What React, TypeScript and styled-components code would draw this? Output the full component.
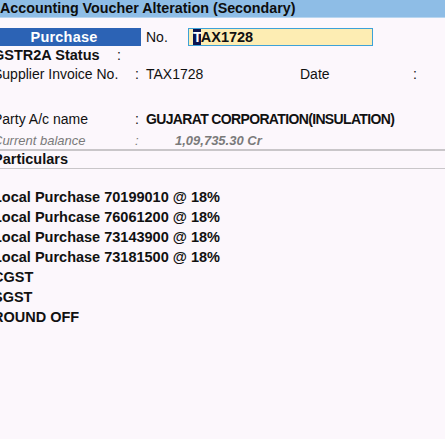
import React from "react";
import styled, { createGlobalStyle } from "styled-components";

const Global = createGlobalStyle`
  html, body { margin: 0; padding: 0; background: #fcf7fc; overflow: hidden; }
  body { font-family: "Liberation Sans", Arial, sans-serif; color: #111; }
`;

const Page = styled.div`
  width: 445px;
  height: 439px;
  background: #fcf7fc;
  overflow: hidden;
`;

const TitleBar = styled.div`
  height: 17px;
  background: #8ebde6;
  border-bottom: 1px solid #b8d6f0;
  font-weight: bold;
  font-size: 14.3px;
  line-height: 17px;
  color: #0d0d0d;
  white-space: nowrap;
`;

const Body = styled.div`
  margin-left: -7px;
`;

const TopRow = styled.div`
  display: flex;
  align-items: center;
  margin-top: 10px;
  height: 18px;
`;

const TypeBadge = styled.div`
  width: 148px;
  height: 18px;
  background: #2c63b5;
  color: #fff;
  font-weight: bold;
  font-size: 14.5px;
  letter-spacing: 0.2px;
  line-height: 18px;
  text-align: center;
  box-sizing: border-box;
  padding-right: 6px;
`;

const NoLabel = styled.div`
  margin-left: 5px;
  width: 42px;
  font-size: 14px;
`;

const NoInput = styled.div`
  width: 185px;
  height: 18px;
  box-sizing: border-box;
  border: 1px solid #3da2d8;
  background: #fdedb3;
  font-weight: bold;
  font-size: 14.5px;
  line-height: 16px;
  padding-left: 4px;
`;

const Cursor = styled.span`
  background: #0b1450;
  color: #fff;
`;

const FieldRow = styled.div<{ $top: number; $muted?: boolean }>`
  display: flex;
  align-items: center;
  height: 18px;
  margin-top: ${(p) => p.$top}px;
  font-size: ${(p) => (p.$muted ? "13px" : "14px")};
  white-space: nowrap;
  color: ${(p) => (p.$muted ? "#7a7a7a" : "#111")};
  font-style: ${(p) => (p.$muted ? "italic" : "normal")};
`;

const Label = styled.div<{ $bold?: boolean; $w: number }>`
  width: ${(p) => p.$w}px;
  font-weight: ${(p) => (p.$bold ? "bold" : "normal")};
  font-size: ${(p) => (p.$bold ? "14.5px" : "inherit")};
`;

const Colon = styled.div`
  width: 11px;
`;

const Value = styled.div<{ $bold?: boolean; $indent?: number; $tight?: boolean; $w?: number }>`
  font-weight: ${(p) => (p.$bold ? "bold" : "normal")};
  padding-left: ${(p) => p.$indent ?? 0}px;
  letter-spacing: ${(p) => (p.$tight ? "-0.65px" : "normal")};
  width: ${(p) => (p.$w ? `${p.$w}px` : "auto")};
`;

const Rule = styled.div`
  height: 2px;
  background: #c9c6c9;
  margin-left: 7px;
`;

const ThinRule = styled.div`
  height: 1px;
  background: #c9c6c9;
  margin-left: 7px;
`;

const Heading = styled.div`
  font-weight: bold;
  font-size: 14.5px;
  height: 17px;
  line-height: 17px;
`;

const List = styled.div`
  margin-top: 18px;
  display: flex;
  flex-direction: column;
`;

const Item = styled.div`
  font-weight: bold;
  font-size: 14.5px;
  height: 20px;
  line-height: 20px;
  white-space: nowrap;
`;

const items = [
  "Local Purchase 70199010 @ 18%",
  "Local Purhcase 76061200 @ 18%",
  "Local Purchase 73143900 @ 18%",
  "Local Purchase 73181500 @ 18%",
  "CGST",
  "SGST",
  "ROUND OFF",
];

export default function App() {
  return (
    <Page>
      <Global />
      <TitleBar>Accounting Voucher Alteration (Secondary)</TitleBar>
      <Body>
        <TopRow>
          <TypeBadge>Purchase</TypeBadge>
          <NoLabel>No.</NoLabel>
          <NoInput>
            <Cursor>T</Cursor>AX1728
          </NoInput>
        </TopRow>
        <FieldRow $top={0}>
          <Label $bold $w={124}>GSTR2A Status</Label>
          <Colon>:</Colon>
        </FieldRow>
        <FieldRow $top={1}>
          <Label $w={142}>Supplier Invoice No.</Label>
          <Colon>:</Colon>
          <Value $w={154}>TAX1728</Value>
          <Label $w={113}>Date</Label>
          <Colon>:</Colon>
        </FieldRow>
        <FieldRow $top={27}>
          <Label $w={142}>Party A/c name</Label>
          <Colon>:</Colon>
          <Value $bold $tight>GUJARAT CORPORATION(INSULATION)</Value>
        </FieldRow>
        <FieldRow $top={3} $muted>
          <Label $w={142}>Current balance</Label>
          <Colon>:</Colon>
          <Value $bold $indent={29}>1,09,735.30 Cr</Value>
        </FieldRow>
        <Rule />
        <Heading>Particulars</Heading>
        <ThinRule />
        <List>
          {items.map((t) => (
            <Item key={t}>{t}</Item>
          ))}
        </List>
      </Body>
    </Page>
  );
}
